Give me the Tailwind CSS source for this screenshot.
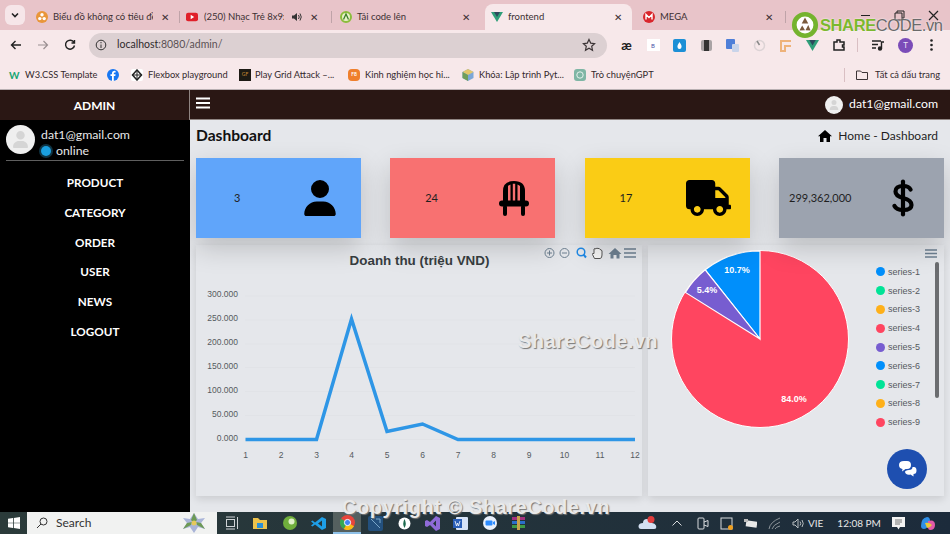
<!DOCTYPE html>
<html lang="vi">

<head>
  <meta charset="UTF-8">
  <title>frontend</title>
  <script src="https://cdn.jsdelivr.net/npm/@tailwindcss/browser@4"></script>
</head>

<body class="w-[950px] h-[534px] overflow-hidden font-['Lato','Noto_Sans',sans-serif]">
  <div class="relative flex flex-col w-[950px] h-[534px] overflow-hidden bg-[#e5e7eb]">

    <!-- Tab strip -->
    <div class="flex items-end h-[30px] pl-[5px] bg-[#e8c4c9] text-[9.500px] text-[#3c3033]">
      <div class="flex items-center justify-center w-5 h-5 mb-[5px] mr-[5px] rounded-md bg-[#f6e6e9]">
        <svg class="w-2.5 h-2.5" viewBox="0 0 10 10" fill="none" stroke="#222" stroke-width="1.6"><path d="M2 3.5 5 6.5 8 3.5"/></svg>
      </div>
      <div class="flex items-center w-[149px] h-[26px] pl-[6px]">
        <svg class="w-3 h-3 shrink-0" viewBox="0 0 12 12"><circle cx="6" cy="6" r="6" fill="#e9963a"/><circle cx="6" cy="3.8" r="1.7" fill="#fff"/><circle cx="3.8" cy="7.6" r="1.7" fill="#fff"/><circle cx="8.2" cy="7.6" r="1.7" fill="#fff"/></svg>
        <span class="ml-[5px] w-[100px] shrink-0 overflow-hidden whitespace-nowrap">Biểu đồ không có tiêu đề</span>
        <span class="ml-[8px] text-[10px] leading-none">✕</span>
      </div>
      <div class="w-px h-3 mb-[7px] bg-[#bfa3a8]"></div>
      <div class="flex items-center w-[151px] h-[26px] pl-[6px]">
        <svg class="w-3 h-2.5 shrink-0" viewBox="0 0 14 10"><rect width="14" height="10" rx="2.5" fill="#e0202a"/><path d="M5.5 2.5 9.5 5 5.5 7.5Z" fill="#fff"/></svg>
        <span class="ml-[6px] w-[80px] shrink-0 overflow-hidden whitespace-nowrap">(250) Nhạc Trẻ 8x9x</span>
        <svg class="ml-[8px] w-2.5 h-2.5" viewBox="0 0 10 10"><path d="M0 3.5H2L5 1V9L2 6.5H0Z" fill="#333"/><path d="M6.5 3Q8 5 6.5 7M8 1.5Q10.500 5 8 8.500" fill="none" stroke="#333"/></svg>
        <span class="ml-[8px] text-[10px] leading-none">✕</span>
      </div>
      <div class="w-px h-3 mb-[7px] bg-[#bfa3a8]"></div>
      <div class="flex items-center w-[153px] h-[26px] pl-[8px]">
        <svg class="w-3 h-3 shrink-0" viewBox="0 0 12 12"><circle cx="6" cy="6" r="5" fill="#e8f2c8" stroke="#8bbd3c" stroke-width="2"/><path d="M3.500 8.500 6 3 8.500 8.500" fill="none" stroke="#3a7d2c" stroke-width="1.300"/></svg>
        <span class="ml-[5px] w-[105px] shrink-0 whitespace-nowrap">Tải code lên</span>
        <span class="text-[10px] leading-none">✕</span>
      </div>
      <div class="flex items-center w-[147px] h-[26px] pl-[6px] rounded-t-lg bg-[#f7e8ea]">
        <svg class="w-3 h-2.5 shrink-0" viewBox="0 0 12 10"><path d="M0 0H12L6 10Z" fill="#2f9e78"/><path d="M3 0H9L6 5Z" fill="#2d4a5c"/></svg>
        <span class="ml-[5px] w-[106px] shrink-0 whitespace-nowrap">frontend</span>
        <span class="text-[10px] leading-none">✕</span>
      </div>
      <div class="flex items-center w-[153px] h-[26px] pl-[11px]">
        <svg class="w-3 h-3 shrink-0" viewBox="0 0 12 12"><circle cx="6" cy="6" r="6" fill="#d9262c"/><path d="M3 8.500V3.500L6 6.500 9 3.500V8.500" fill="none" stroke="#fff" stroke-width="1.400"/></svg>
        <span class="ml-[5px] w-[105px] shrink-0 whitespace-nowrap">MEGA</span>
        <span class="text-[10px] leading-none">✕</span>
      </div>
      <div class="w-px h-3 mb-[7px] bg-[#bfa3a8]"></div>
      <span class="ml-[8px] mb-[5px] text-[14px] leading-none">+</span>
      <div class="flex items-center ml-auto mb-[9px] pr-[11px] gap-[23px]">
        <svg class="w-[11px] h-[11px]" viewBox="0 0 11 11" fill="none" stroke="#222"><path d="M1 5.500H10"/></svg>
        <svg class="w-[11px] h-[11px]" viewBox="0 0 11 11" fill="none" stroke="#222"><path d="M1 3H8V10H1ZM3 3V1H10V8H8"/></svg>
        <svg class="w-[11px] h-[11px]" viewBox="0 0 11 11" fill="none" stroke="#222" stroke-width="1.200"><path d="M1 1 10 10M10 1 1 10"/></svg>
      </div>
    </div>

    <!-- Address bar -->
    <div class="flex items-center h-[30px] bg-[#f7e8ea]">
      <div class="flex items-center w-[89px] pl-[10px] gap-[15px]">
        <svg class="w-3 h-3" viewBox="0 0 12 12" fill="none" stroke="#222" stroke-width="1.400"><path d="M11 6H1.500M5.500 2 1.500 6 5.500 10"/></svg>
        <svg class="w-3 h-3" viewBox="0 0 12 12" fill="none" stroke="#9a8f91" stroke-width="1.200"><path d="M1 6H10.500M6.500 2 10.500 6 6.500 10"/></svg>
        <svg class="w-3 h-3" viewBox="0 0 12 12" fill="none" stroke="#222" stroke-width="1.400"><path d="M10 3.500A4.500 4.500 0 1 0 10.500 6.500M10.500 1V4H7.500"/></svg>
      </div>
      <div class="flex items-center w-[518px] h-[25px] pl-[6px] pr-[11px] rounded-full bg-[#dcd0d2]">
        <svg class="w-3 h-3 shrink-0" viewBox="0 0 12 12" fill="none" stroke="#333"><circle cx="6" cy="6" r="4.800"/><path d="M6 5.500V9M6 3V4.300"/></svg>
        <span class="ml-[10px] text-[10.500px] text-[#5b5154] whitespace-nowrap"><span class="text-[#2f2a2c]">localhost</span>:8080/admin/</span>
        <svg class="ml-auto w-3.5 h-3.5" viewBox="0 0 14 14" fill="none" stroke="#3c3436" stroke-width="1.200"><path d="M7 1.500 8.700 5.100 12.600 5.600 9.700 8.300 10.500 12.200 7 10.200 3.500 12.200 4.300 8.300 1.400 5.600 5.300 5.100Z"/></svg>
      </div>
      <div class="flex items-center pl-[13px] gap-[13.500px]">
        <span class="w-[13px] text-[13px] leading-none font-bold text-center text-[#222]">æ</span>
        <span class="flex items-center justify-center w-[13px] h-3 bg-white text-[6px] text-[#4a55a8]">B</span>
        <svg class="w-[13px] h-[13px]" viewBox="0 0 13 13"><rect width="13" height="13" rx="2" fill="#1c8fd6"/><path d="M6.500 3Q9 6.500 8.500 8A2 2 0 0 1 4.500 8Q4 6.500 6.500 3Z" fill="#fff"/></svg>
        <svg class="w-[13px] h-[13px]" viewBox="0 0 13 13"><rect x="1" y="1" width="11" height="11" rx="2" fill="#a9a3a5"/><rect x="4" y="1" width="5" height="11" fill="#333"/></svg>
        <svg class="w-[13px] h-[13px]" viewBox="0 0 13 13"><rect width="9" height="10" rx="1" fill="#4f7fd8"/><rect x="6" y="5" width="7" height="8" rx="1" fill="#c9d4ea"/></svg>
        <svg class="w-[13px] h-[13px]" viewBox="0 0 13 13" fill="none" stroke="#dcd3d5" stroke-width="1.500"><circle cx="6.500" cy="6.500" r="5"/><path d="M4 2 6.500 6" stroke="#888"/></svg>
        <svg class="w-[13px] h-[13px]" viewBox="0 0 13 13" fill="none" stroke="#eeb27a" stroke-width="2"><path d="M12 2H2V12H6V7H12"/></svg>
        <svg class="w-[13px] h-[11px]" viewBox="0 0 12 10"><path d="M0 0H12L6 10Z" fill="#2f9e78"/><path d="M3 0H9L6 5Z" fill="#2d4a5c"/></svg>
        <svg class="w-[14px] h-[14px]" viewBox="0 0 14 14" fill="none" stroke="#222" stroke-width="1.500"><path d="M2 4H5V2H8V4H12V7H10.500V9H12V12H2Z"/></svg>
      </div>
      <div class="w-px h-3.5 ml-[11px] bg-[#d9bfc3]"></div>
      <svg class="ml-[13px] w-3.5 h-3.5" viewBox="0 0 14 14" fill="none" stroke="#222" stroke-width="1.400"><path d="M1 3H10M1 6.500H7M1 10H5"/><circle cx="9" cy="10.500" r="1.500" fill="#222"/><path d="M10.500 10.500V4H13"/></svg>
      <span class="flex items-center justify-center ml-[13px] w-[15px] h-[15px] rounded-full bg-[#7b4cb8] text-[8px] text-[#e8dff5]">T</span>
      <svg class="ml-[17px] w-[3px] h-3" viewBox="0 0 3 12" fill="#222"><circle cx="1.500" cy="1.500" r="1.300"/><circle cx="1.500" cy="6" r="1.300"/><circle cx="1.500" cy="10.500" r="1.300"/></svg>
    </div>

    <!-- Bookmarks -->
    <div class="flex items-center h-[30px] pl-[9px] border-b border-[#b9b0b2] bg-[#f7e8ea] text-[9.300px] text-[#33292c] whitespace-nowrap">
      <span class="w-[16px] text-[10px] leading-none font-bold text-[#17a673]">W</span>
      <span class="w-[82px]">W3.CSS Template</span>
      <svg class="w-3 h-3 mr-[12px]" viewBox="0 0 12 12"><circle cx="6" cy="6" r="6" fill="#1877f2"/><path d="M6.800 12V7H8.300L8.600 5.200H6.800V4.200Q6.800 3.400 7.700 3.400H8.600V1.900Q6.900 1.500 6 2.200 5 2.900 5 4V5.200H3.500V7H5V12Z" fill="#fff"/></svg>
      <svg class="w-3 h-3 mr-[5px]" viewBox="0 0 12 12"><rect width="12" height="12" rx="2" fill="#fff"/><path d="M6 1 10.500 6 6 11 1.500 6Z" fill="none" stroke="#222" stroke-width="1.500"/><path d="M1.500 6H10.500M6 1V11" stroke="#222"/></svg>
      <span class="w-[91px]">Flexbox playground</span>
      <span class="flex items-center justify-center w-3 h-3 mr-[4px] bg-[#1d1a14] text-[5px] text-[#c98c33]">GF</span>
      <span class="w-[93px]">Play Grid Attack –...</span>
      <span class="flex items-center justify-center w-3 h-3 mr-[5px] rounded-sm bg-[#ef7f2c] text-[5px] font-bold text-white">F8</span>
      <span class="w-[97px]">Kinh nghiệm học hi...</span>
      <svg class="w-3 h-3 mr-[5px]" viewBox="0 0 12 12"><path d="M6 0 11.500 3V9L6 12 .5 9V3Z" fill="#7ba7d8"/><path d="M6 0 11.500 3 6 6 .5 3Z" fill="#e3c76a"/><path d="M6 6V12L.5 9V3Z" fill="#6f9e5a"/></svg>
      <span class="w-[95px]">Khóa: Lập trình Pyt...</span>
      <svg class="w-3 h-3 mr-[5px]" viewBox="0 0 12 12"><rect width="12" height="12" rx="3" fill="#7fb6a5"/><circle cx="6" cy="6" r="3.200" fill="none" stroke="#e6f2ee"/></svg>
      <span class="w-[253px]">Trò chuyệnGPT</span>
      <div class="w-px h-3.5 mr-[11px] bg-[#d9bfc3]"></div>
      <svg class="w-3 h-3 mr-[7px]" viewBox="0 0 12 12" fill="none" stroke="#3c3436"><path d="M.5 2H4.500L6 3.500H11.500V10.500H.5Z"/></svg>
      <span>Tất cả dấu trang</span>
    </div>

    <!-- App -->
    <div class="flex flex-1 min-h-0">
      <aside class="flex flex-col w-[190px] shrink-0 bg-black text-white">
        <div class="flex items-center justify-center h-[30px] pt-px bg-[#2a1714] border-r border-[#8f8582] text-[12px] font-bold">ADMIN</div>
        <div class="flex h-[41px] mx-[6px] pt-[5px] border-b border-[#5f5f5f]">
          <div class="flex items-center justify-center w-[29px] h-[29px] rounded-full bg-[#efefef]">
            <svg class="w-[17px] h-[17px]" viewBox="0 0 448 512" fill="#d5d5d5"><path d="M224 256A128 128 0 1 0 224 0a128 128 0 1 0 0 256zm-45.700 48C79.800 304 0 383.800 0 482.300C0 498.700 13.300 512 29.700 512H418.300c16.400 0 29.700-13.300 29.700-29.700C448 383.800 368.200 304 269.700 304H178.300z"/></svg>
          </div>
          <div class="ml-[6px] text-[12.300px] leading-[16px] text-[#e8e8e8]">
            <div class="mt-[2px]">dat1@gmail.com</div>
            <div class="flex items-center"><span class="w-[10px] h-[10px] mr-[5px] rounded-full bg-[#1a9fe0] shadow-[0_0_0_2px_#0f3444]"></span>online</div>
          </div>
        </div>
        <nav class="flex flex-col items-center pt-[7px] text-[11.700px] font-bold">
          <a class="flex items-center h-[29.750px]">PRODUCT</a>
          <a class="flex items-center h-[29.750px]">CATEGORY</a>
          <a class="flex items-center h-[29.750px]">ORDER</a>
          <a class="flex items-center h-[29.750px]">USER</a>
          <a class="flex items-center h-[29.750px]">NEWS</a>
          <a class="flex items-center h-[29.750px]">LOGOUT</a>
        </nav>
      </aside>

      <main class="flex flex-col flex-1 min-w-0">
        <div class="flex items-center h-[30px] pl-[6px] pr-[12px] bg-[#2a1714] text-white border-b border-[#8f8582]">
          <svg class="w-[14px] h-[12px] mb-[3px]" viewBox="0 0 14 12" fill="none" stroke="#fff" stroke-width="1.800"><path d="M0 1.500H14M0 6H14M0 10.500H14"/></svg>
          <div class="flex items-center justify-center ml-auto w-[18px] h-[18px] rounded-full bg-[#efefef]">
            <svg class="w-[10px] h-[10px]" viewBox="0 0 448 512" fill="#d5d5d5"><path d="M224 256A128 128 0 1 0 224 0a128 128 0 1 0 0 256zm-45.700 48C79.800 304 0 383.800 0 482.300C0 498.700 13.300 512 29.700 512H418.300c16.400 0 29.700-13.300 29.700-29.700C448 383.800 368.200 304 269.700 304H178.300z"/></svg>
          </div>
          <span class="ml-[6px] text-[12.300px]">dat1@gmail.com</span>
        </div>

        <div class="flex items-center h-[38px] pl-[6px] pr-[12px]">
          <h1 class="text-[15.600px] font-bold text-[#111] mt-[-6px]">Dashboard</h1>
          <svg class="ml-auto w-[14px] h-[12px] mt-[-6px]" viewBox="0 0 14 12" fill="#000"><path d="M7 0 14 6.200H12V12H8.500V8H5.500V12H2V6.200H0Z"/></svg>
          <span class="ml-[6px] text-[12px] text-[#1f1f1f] mt-[-6px]">Home - Dashboard</span>
        </div>

        <!-- Stat cards -->
        <div class="relative z-10 grid grid-cols-4 gap-x-[29.330px] h-[80px] ml-[6px] mr-[6px] text-[11px] text-[#1f1f1f]">
          <div class="grid grid-cols-2 items-center bg-[#60a5fa] shadow-[0_10px_25px_rgba(0,0,0,0.18)]">
            <span class="text-center">3</span>
            <svg class="justify-self-center w-[32px] h-[36px]" viewBox="0 0 448 512"><path d="M224 256A128 128 0 1 0 224 0a128 128 0 1 0 0 256zm-45.700 48C79.800 304 0 383.800 0 482.300C0 498.700 13.300 512 29.700 512H418.300c16.400 0 29.700-13.300 29.700-29.700C448 383.800 368.200 304 269.700 304H178.300z"/></svg>
          </div>
          <div class="grid grid-cols-2 items-center bg-[#f87171] shadow-[0_10px_25px_rgba(0,0,0,0.18)]">
            <span class="text-center">24</span>
            <svg class="justify-self-center w-[32px] h-[36px]" viewBox="0 0 32 36"><path fill-rule="evenodd" d="M5 21V11Q5 1 16 1T27 11V21ZM10 6V21H12.500V4.500Q11 5 10 6ZM14.800 3.800V21H17.200V3.800ZM19.500 4.500V21H22V6Q21 5 19.500 4.500Z"/><rect x="1" y="20.500" width="30" height="6" rx="3"/><rect x="5" y="25" width="4" height="11" rx="2"/><rect x="23" y="25" width="4" height="11" rx="2"/></svg>
          </div>
          <div class="grid grid-cols-2 items-center bg-[#facc15] shadow-[0_10px_25px_rgba(0,0,0,0.18)]">
            <span class="text-center">17</span>
            <svg class="justify-self-center w-[45px] h-[36px]" viewBox="0 0 640 512"><path d="M624 352h-16V243.900c0-12.700-5.100-24.900-14.100-33.900L494 110.100c-9-9-21.200-14.100-33.900-14.100H416V48c0-26.500-21.500-48-48-48H48C21.500 0 0 21.500 0 48v320c0 26.500 21.500 48 48 48h16c0 53 43 96 96 96s96-43 96-96h128c0 53 43 96 96 96s96-43 96-96h48c8.800 0 16-7.200 16-16v-32c0-8.800-7.200-16-16-16zM160 464c-26.500 0-48-21.500-48-48s21.500-48 48-48 48 21.500 48 48-21.500 48-48 48zm320 0c-26.500 0-48-21.500-48-48s21.500-48 48-48 48 21.500 48 48-21.500 48-48 48zm80-208H416V144h44.100l99.900 99.900V256z"/></svg>
          </div>
          <div class="grid grid-cols-2 items-center bg-[#9ca3af] shadow-[0_10px_25px_rgba(0,0,0,0.18)]">
            <span class="text-center whitespace-nowrap">299,362,000</span>
            <svg class="justify-self-center w-[22px] h-[38px]" viewBox="0 0 22 38" fill="none" stroke="#000" stroke-width="4.200" stroke-linecap="round"><path d="M18.500 10.500Q17 7 11 7 3.500 7 3.500 12.500 3.500 17 11 19 19.500 21 19.500 26 19.500 31 11 31 4.500 31 2.500 27"/><path d="M11 2.500V35.500"/></svg>
          </div>
        </div>

        <!-- Charts -->
        <div class="flex gap-[6px] h-[251px] mt-[7px] ml-[6px] mr-[6px]">
          <div class="w-[446px] bg-[#e5e7eb] shadow-[0_3px_8px_rgba(0,0,0,0.12)]">
            <svg width="446" height="251" viewBox="196 245 446 251" font-family="'Liberation Sans',sans-serif">
              <text x="419.500" y="265" text-anchor="middle" font-size="13.400" font-weight="700" fill="#373d3f">Doanh thu (triệu VND)</text>
              <g stroke="#e1e3e7" stroke-width="1">
                <path d="M245 296H635M245 320H635M245 344H635M245 367.500H635M245 391.500H635M245 415.500H635M245 439.500H635"/>
              </g>
              <g font-size="8.500" fill="#555b60" text-anchor="end">
                <text x="238" y="297">300.000</text>
                <text x="238" y="321">250.000</text>
                <text x="238" y="345">200.000</text>
                <text x="238" y="369">150.000</text>
                <text x="238" y="393">100.000</text>
                <text x="238" y="417">50.000</text>
                <text x="238" y="441">0.000</text>
              </g>
              <g font-size="8.500" fill="#555b60" text-anchor="middle">
                <text x="245.500" y="458">1</text><text x="281" y="458">2</text><text x="316.500" y="458">3</text><text x="351.500" y="458">4</text><text x="387" y="458">5</text><text x="422.500" y="458">6</text><text x="458" y="458">7</text><text x="493.500" y="458">8</text><text x="529" y="458">9</text><text x="564.500" y="458">10</text><text x="600" y="458">11</text><text x="635" y="458">12</text>
              </g>
              <path d="M245.500 439.500H316.500L351.500 319 387 431.500 422.500 424 458 439.500H635" fill="none" stroke="#2e96e6" stroke-width="3.500"/>
              <g fill="none" stroke="#6e8192" stroke-width="1">
                <circle cx="549.500" cy="253" r="4.500"/><path d="M547 253H552M549.500 250.500V255.500"/>
                <circle cx="564.500" cy="253" r="4.500"/><path d="M562 253H567"/>
                <circle cx="581" cy="252" r="3.800" stroke="#1e88e5" stroke-width="1.500"/><path d="M583.500 254.500 586 257.500" stroke="#1e88e5" stroke-width="2"/>
                <path d="M594.500 258.500 592.500 254.500Q592 253 594 253.500V249Q595 248 596 249 596.500 247.500 598 248.500 599.500 248 600 249.500 601.500 249.500 602 251V255Q602 258.500 600 258.500Z" stroke="#555" fill="#f5f5f5"/>
                <path d="M615 248 621.500 254H619.500V258.500H616.500V255H613.500V258.500H610.500V254H608.500Z" fill="#6e8192" stroke="none"/>
                <path d="M624 249H636M624 253H636M624 257H636" stroke-width="1.500"/>
              </g>
            </svg>
          </div>
          <div class="relative flex w-[296px] bg-[#e5e7eb] shadow-[0_3px_8px_rgba(0,0,0,0.12)]">
            <svg class="shrink-0" width="226" height="251" viewBox="648 245 226 251" font-family="'Liberation Sans',sans-serif">
              <circle cx="760" cy="339" r="88.500" fill="#ff4560" stroke="#fff" stroke-width="1"/>
              <path d="M760 339 705.200 269.900A88 88 0 0 1 760 251Z" fill="#008ffb" stroke="#fff" stroke-width="1.200"/>
              <path d="M760 339 685.400 292.400A88 88 0 0 1 705.200 269.900Z" fill="#775dd0" stroke="#fff" stroke-width="1.200"/>
              <g font-size="9" font-weight="700" fill="#fff" text-anchor="middle">
                <text x="737" y="272.500">10.7%</text>
                <text x="707" y="292.500">5.4%</text>
                <text x="794" y="401.500">84.0%</text>
              </g>
            </svg>
            <div class="flex flex-col pt-[17.500px] ml-[2px] text-[9px] leading-none text-[#55595e] font-['Liberation_Sans',sans-serif]">
              <div class="flex items-center h-[18.800px] gap-[3px]"><span class="w-[9px] h-[9px] rounded-full bg-[#008ffb]"></span><span class="mt-px">series-1</span></div>
              <div class="flex items-center h-[18.800px] gap-[3px]"><span class="w-[9px] h-[9px] rounded-full bg-[#00e396]"></span><span class="mt-px">series-2</span></div>
              <div class="flex items-center h-[18.800px] gap-[3px]"><span class="w-[9px] h-[9px] rounded-full bg-[#feb019]"></span><span class="mt-px">series-3</span></div>
              <div class="flex items-center h-[18.800px] gap-[3px]"><span class="w-[9px] h-[9px] rounded-full bg-[#ff4560]"></span><span class="mt-px">series-4</span></div>
              <div class="flex items-center h-[18.800px] gap-[3px]"><span class="w-[9px] h-[9px] rounded-full bg-[#775dd0]"></span><span class="mt-px">series-5</span></div>
              <div class="flex items-center h-[18.800px] gap-[3px]"><span class="w-[9px] h-[9px] rounded-full bg-[#008ffb]"></span><span class="mt-px">series-6</span></div>
              <div class="flex items-center h-[18.800px] gap-[3px]"><span class="w-[9px] h-[9px] rounded-full bg-[#00e396]"></span><span class="mt-px">series-7</span></div>
              <div class="flex items-center h-[18.800px] gap-[3px]"><span class="w-[9px] h-[9px] rounded-full bg-[#feb019]"></span><span class="mt-px">series-8</span></div>
              <div class="flex items-center h-[18.800px] gap-[3px]"><span class="w-[9px] h-[9px] rounded-full bg-[#ff4560]"></span><span class="mt-px">series-9</span></div>
            </div>
            <svg class="absolute right-[7px] top-[4px] w-[12px] h-[9px]" viewBox="0 0 12 9" fill="none" stroke="#6e8192" stroke-width="1.400"><path d="M0 1H12M0 4.500H12M0 8H12"/></svg>
            <div class="absolute right-[5px] top-[17px] w-[4px] h-[136px] rounded-full bg-[#6b6d70]"></div>
            <button class="absolute left-[239px] top-[204px] flex items-center justify-center w-[40px] h-[40px] rounded-full bg-[#1e4fb0]">
              <svg class="w-[21px] h-[21px]" viewBox="0 0 21 21" fill="#fff"><path d="M2 6Q2 2 7 2H10Q14 2 14 6 14 10 10 10H8.500L5 12.500 5.500 10Q2 9.500 2 6Z"/><path d="M12 11Q15.500 11 15.500 8H17Q19.500 8 19.500 11.500 19.500 15 16.500 15L16.500 17.500 13.500 15.500Q9 16.500 8 13 8 11.500 12 11Z"/></svg>
            </button>
          </div>
        </div>
      </main>
    </div>

    <!-- Taskbar -->
    <div class="flex items-center h-[22px] shrink-0 bg-linear-to-r from-[#2b3b3a] to-[#1c2b3b] text-[#e6e6e6]">
      <div class="flex items-center justify-center w-[27px] h-full">
        <svg class="w-[12px] h-[12px]" viewBox="0 0 12 12" fill="#fff"><path d="M0 1.700 5 1V5.700H0ZM5.800 .9 12 0V5.700H5.800ZM0 6.300H5V11L0 10.300ZM5.800 6.300H12V12L5.800 11.100Z"/></svg>
      </div>
      <div class="flex items-center w-[190px] h-full pl-[9px] pr-[11px] bg-[#f1f2f1] text-[12px] text-[#333]">
        <svg class="w-[12px] h-[12px]" viewBox="0 0 12 12" fill="none" stroke="#333"><circle cx="7.500" cy="4.500" r="3.500"/><path d="M5 7 1 11"/></svg>
        <span class="ml-[8px]">Search</span>
        <svg class="ml-auto w-[24px] h-[22px]" viewBox="0 0 24 22"><path d="M12 1 16 7 23 6 19 11 23 17 16 15 12 21 8 15 1 17 5 11 1 6 8 7Z" fill="#a9b4d8"/><path d="M12 1 15 8 12 11 9 8Z M23 17 15 13 14 10 19 11Z M1 17 9 13 10 10 5 11Z" fill="#6d9a55"/><circle cx="12" cy="11" r="2.500" fill="#e6c95c"/></svg>
      </div>
      <div class="flex items-center h-full pl-[8px] gap-[13.300px]">
        <svg class="w-[14px] h-[14px]" viewBox="0 0 14 14" fill="none" stroke="#cfd3d6"><rect x="1.500" y="3.500" width="8" height="7"/><path d="M1 1H10M1 13H10M12.500 1V13"/></svg>
        <svg class="w-[16px] h-[14px]" viewBox="0 0 16 14"><path d="M1 2H6L8 4H15V13H1Z" fill="#edc24b"/><rect x="5" y="7" width="6" height="5" fill="#2c8fd6"/></svg>
        <svg class="w-[16px] h-[16px]" viewBox="0 0 16 16"><circle cx="8" cy="8" r="7" fill="#6fae3c"/><circle cx="9.500" cy="6.500" r="3" fill="#dff0c8"/></svg>
        <svg class="w-[15px] h-[15px]" viewBox="0 0 15 15"><path d="M11 1 15 3V12L11 14 4 8.500 1.500 10.500 0 9.500 2.500 7.500 0 5.500 1.500 4.500 4 6.500ZM11 4.500 7 7.500 11 10.500Z" fill="#1e9fe8"/></svg>
        <div class="flex items-center justify-center w-[28px] h-[22px] -mx-[6px] bg-[#55605f] border-b-2 border-[#8fc1e8]">
          <svg class="w-[15px] h-[15px]" viewBox="0 0 16 16"><circle cx="8" cy="8" r="8" fill="#e8453c"/><path d="M8 8 15 12A8 8 0 0 1 4 15Z" fill="#f9bc15"/><path d="M8 8 4 15A8 8 0 0 1 1 4Z" fill="#34a853"/><circle cx="8" cy="8" r="3.300" fill="#4285f4" stroke="#fff"/></svg>
        </div>
        <svg class="w-[15px] h-[15px]" viewBox="0 0 15 15"><rect width="15" height="15" rx="2" fill="#23507d"/><path d="M3 3 12 12M8 3H12V7" fill="none" stroke="#7aa7c9"/></svg>
        <svg class="w-[15px] h-[15px]" viewBox="0 0 15 15"><circle cx="7.500" cy="7.500" r="6" fill="#fff"/><path d="M7.500 3Q10 7.500 7.500 12 5 7.500 7.500 3Z" fill="#1c6b4f"/></svg>
        <svg class="w-[15px] h-[15px]" viewBox="0 0 15 15"><path d="M11 0 15 2V13L11 15 5 9 2 11 0 10V5L2 4 5 6ZM11 4.500 8 7.500 11 10.500Z" fill="#8f6bd8"/></svg>
        <svg class="w-[15px] h-[15px]" viewBox="0 0 15 15"><rect x="3" y="1" width="12" height="13" rx="1" fill="#d7e3f7"/><rect y="3" width="9" height="9" fill="#2b5fb8"/><path d="M2 5 3.500 10 4.500 7 5.500 10 7 5" fill="none" stroke="#fff" stroke-width=".8"/></svg>
        <svg class="w-[16px] h-[15px]" viewBox="0 0 16 15"><circle cx="8" cy="7" r="7" fill="#e9f0fb"/><rect x="3.500" y="4.500" width="7" height="5" rx="1" fill="#2d8cff"/><path d="M11 6 13 5V9L11 8Z" fill="#2d8cff"/></svg>
        <svg class="w-[15px] h-[15px]" viewBox="0 0 15 15"><rect x="1" y="1" width="13" height="3" fill="#a3307d"/><rect x="1" y="5" width="13" height="3" fill="#2a6ec9"/><rect x="1" y="9" width="13" height="3" fill="#3f9a46"/><rect x="6" y="0" width="3" height="14" fill="#c9a24a"/></svg>
      </div>
      <svg class="ml-[111px] w-[20px] h-[14px]" viewBox="0 0 20 14"><path d="M4 13H17Q20 13 19 9.500 18 7 15 7 14 3 10 3 6 3 6 7 2 7 1.500 10 1.500 13 4 13Z" fill="#d4e0f2"/><circle cx="14" cy="3.500" r="3.500" fill="#e23c3c"/></svg>
      <svg class="ml-[15px] w-[10px] h-[6px]" viewBox="0 0 10 6" fill="none" stroke="#d8dbde"><path d="M.5 5.500 5 1 9.500 5.500"/></svg>
      <div class="flex items-center ml-[14px] gap-[11px]">
        <svg class="w-[13px] h-[13px]" viewBox="0 0 13 13" fill="none" stroke="#d8dbde"><rect x="2" y="1" width="6" height="11" rx="1"/><path d="M8 5 12 3.500V9.500L8 8"/></svg>
        <svg class="w-[13px] h-[13px]" viewBox="0 0 13 13" fill="none" stroke="#d8dbde"><rect x="1" y="1" width="11" height="11"/><circle cx="10.500" cy="10.500" r="2.500" fill="#f0a020" stroke="none"/></svg>
        <svg class="w-[13px] h-[13px]" viewBox="0 0 13 13"><rect x="2" y="4" width="11" height="6" fill="#e8e8e8" transform="rotate(8 7 7)"/><rect y="2" width="4" height="3" fill="#bbb"/></svg>
        <svg class="w-[13px] h-[13px]" viewBox="0 0 13 13" fill="none" stroke="#8c949a"><path d="M1 12Q2 5 12 1M4 12Q5 8 12 5M7 12Q8 10 12 9"/></svg>
        <svg class="w-[13px] h-[13px]" viewBox="0 0 13 13" fill="none" stroke="#b9bec2"><path d="M1 5H3L6 2V11L3 8H1ZM8 4.500Q9.500 6.500 8 8.500M10 3Q12.500 6.500 10 10"/></svg>
      </div>
      <span class="ml-[3px] text-[10px]">VIE</span>
      <span class="ml-[14px] text-[10px]">12:08 PM</span>
      <svg class="ml-[11px] w-[13px] h-[13px]" viewBox="0 0 13 13"><path d="M0 0H13V10H8L6.500 12.500 5 10H0Z" fill="#f2f2f2"/><path d="M3 3H10M3 5H10M3 7H8" stroke="#555" stroke-width=".8"/></svg>
      <svg class="ml-[15px] w-[16px] h-[15px]" viewBox="0 0 16 15"><path d="M1 10Q1 2 7 1 10 1 10 5 8 13 4 13 1 13 1 10Z" fill="#2f8fe8"/><path d="M8 5Q15 3 15 9 15 14 10 14 7 14 8 5Z" fill="#e25aa8"/><path d="M5 7Q9 6 12 9 10 12 7 12Z" fill="#e9c93a"/></svg>
    </div>

    <!-- Watermarks -->
    <div class="absolute z-20 left-[791px] top-[11px] flex items-center pointer-events-none font-['Liberation_Sans',sans-serif]">
      <svg class="w-[28px] h-[28px]" viewBox="0 0 30 30"><circle cx="15" cy="15" r="11.500" fill="#fff" stroke="#74b32e" stroke-width="5"/><path d="M15 7 18.500 13.500H11.500ZM9 21 12 15.500 15 20.500ZM21 21 15.500 20.500 18.500 15Z" fill="#7a5a3c"/></svg>
      <span class="ml-[1px] text-[16.500px] leading-none font-bold tracking-[-0.4px] text-[#7cb82f] [text-shadow:0_0_2px_#fff]">SHARE</span>
      <span class="text-[16.500px] leading-none tracking-[-0.4px] text-[#6a6a6a] [text-shadow:0_0_2px_#fff]">CODE.vn</span>
    </div>
    <span class="absolute z-20 left-[518px] top-[329px] text-[20px] leading-[24px] font-['Liberation_Sans',sans-serif] font-bold tracking-[0.45px] text-[#e9e9e9] [text-shadow:1px_1px_1px_#777] pointer-events-none whitespace-nowrap">ShareCode.vn</span>
    <span class="absolute z-20 left-[342px] top-[495px] text-[20px] leading-[24px] font-['Liberation_Sans',sans-serif] font-bold tracking-[0.55px] text-[#e9e9e9] [text-shadow:1px_1px_1px_#777] pointer-events-none whitespace-nowrap">Copyright © ShareCode.vn</span>
  </div>
</body>

</html>
